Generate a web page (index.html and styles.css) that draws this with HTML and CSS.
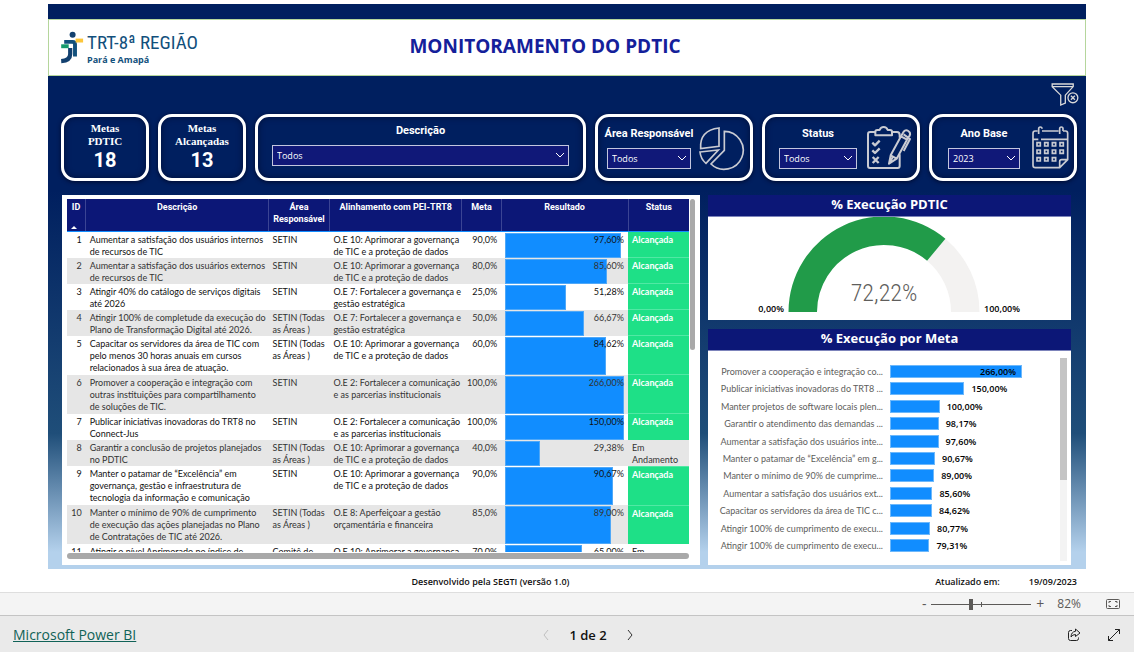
FILE: index.html
```html
<!DOCTYPE html>
<html lang="pt-BR">
<head>
<meta charset="utf-8">
<title>Monitoramento do PDTIC</title>
<link rel="stylesheet" href="styles.css">
</head>
<body>
<main class="stage">
  <div class="report">
    <header class="banner">
      <div class="brand">
        <svg class="brand-mark" viewBox="0 0 80 106" aria-hidden="true">
          <circle cx="42" cy="12" r="10" fill="#12406f"/>
          <path d="M14 36H42Q50 36 50 44V85" fill="none" stroke="#12507c" stroke-width="13"/>
          <path d="M34 56V76Q34 98 4 100" fill="none" stroke="#12406f" stroke-width="14"/>
          <rect x="4" y="44" width="25" height="13" fill="#159a6c"/>
          <rect x="52" y="25" width="25" height="13" fill="#fcc63a"/>
        </svg>
        <div class="brand-text">
          <span class="brand-name">TRT-8ª REGIÃO</span>
          <span class="brand-place">Pará e Amapá</span>
        </div>
      </div>
      <h1 class="title">MONITORAMENTO DO PDTIC</h1>
    </header>

    <div class="canvas">
      <div class="clear-row">
        <button class="clear" aria-label="Limpar filtros">
          <svg viewBox="0 0 90 76" width="30" height="25" fill="none" stroke="#d9d9d9" stroke-width="4">
            <path d="M6 6H70V14L46 40V64L32 70V40L6 14ZM6 14H70"/>
            <circle cx="69" cy="48" r="15" fill="#001f5f"/>
            <path d="M63 42L75 54M75 42L63 54"/>
          </svg>
        </button>
      </div>

      <div class="cards">
        <div class="card kpi"><span class="kpi-label">Metas<br>PDTIC</span><span class="kpi-value">18</span></div>
        <div class="card kpi"><span class="kpi-label">Metas<br>Alcançadas</span><span class="kpi-value">13</span></div>
        <div class="card slicer wide">
          <div class="field">
            <label for="f-desc">Descrição</label>
            <div class="pick"><select id="f-desc"><option>Todos</option></select><svg viewBox="0 0 10 6"><path d="M1 1L5 5L9 1"/></svg></div>
          </div>
        </div>
        <div class="card slicer area">
          <div class="field">
            <label for="f-area">Área Responsável</label>
            <div class="pick"><select id="f-area"><option>Todos</option></select><svg viewBox="0 0 10 6"><path d="M1 1L5 5L9 1"/></svg></div>
          </div>
          <svg class="deco" viewBox="0 0 144 138" width="48" height="46" fill="none" stroke="#c9cbd2" stroke-width="5">
            <path d="M63 9V64L8 71Q4 16 63 9Z"/>
            <path d="M6 81L61 75L24 115Q8 102 6 81Z"/>
            <path d="M79 19A57 57 0 1 1 39 117L79 76Z"/>
          </svg>
        </div>
        <div class="card slicer status">
          <div class="field">
            <label for="f-status">Status</label>
            <div class="pick"><select id="f-status"><option>Todos</option></select><svg viewBox="0 0 10 6"><path d="M1 1L5 5L9 1"/></svg></div>
          </div>
          <svg class="deco" viewBox="0 0 141 138" width="47" height="46" fill="none" stroke="#c9cbd2" stroke-width="6" stroke-linejoin="round">
            <path d="M30 21H12Q6 21 6 28V123Q6 129 12 129H95Q101 129 101 123V88M76 21H93Q101 21 101 30V38"/>
            <path d="M28 31V20Q28 15 34 15H41Q44 6 53 6T65 15H72Q78 15 78 20V31Z"/>
            <path d="M19 53L27 61L41 47M19 76L27 84L41 70M20 96L38 114M38 96L20 114" stroke-width="7"/>
            <path d="M69 116L74 91L105 34L123 44L92 101ZM74 91L92 101M105 34L113 20Q119 13 127 18T131 32L123 44M69 116L80 97M113 28L132 42L113 78"/>
          </svg>
        </div>
        <div class="card slicer year">
          <div class="field">
            <label for="f-year">Ano Base</label>
            <div class="pick"><select id="f-year"><option>2023</option></select><svg viewBox="0 0 10 6"><path d="M1 1L5 5L9 1"/></svg></div>
          </div>
          <svg class="deco" viewBox="0 0 117 135" width="39" height="45" fill="none" stroke="#c9cbd2" stroke-width="5">
            <path d="M20 18H12Q6 18 6 25V121Q6 128 13 128H86L110 104V25Q110 18 104 18H96M33 18H83M6 43H22M30 43H110M86 128V110Q86 104 92 104H110"/>
            <path d="M23 27V11Q23 6 28 6T33 11M86 27V11Q86 6 91 6T96 11V18"/>
            <path d="M18 53h10v10h-10zM41 53h10v10h-10zM64 53h10v10h-10zM87 53h10v10h-10zM18 75h10v10h-10zM41 75h10v10h-10zM64 75h10v10h-10zM87 75h10v10h-10zM18 98h10v10h-10zM41 98h10v10h-10zM64 98h10v10h-10z"/>
          </svg>
        </div>
      </div>

      <div class="panels">
        <section class="panel table-panel">
          <div class="table-view">
            <table class="grid">
              <colgroup><col class="c-id"><col class="c-desc"><col class="c-area"><col class="c-pei"><col class="c-meta"><col class="c-res"><col class="c-status"></colgroup>
              <thead>
                <tr><th>ID<span class="sort"></span></th><th>Descrição</th><th>Área<br>Responsável</th><th>Alinhamento com PEI-TRT8</th><th>Meta</th><th>Resultado</th><th>Status</th></tr>
              </thead>
              <tbody>
                <tr><td>1</td><td>Aumentar a satisfação dos usuários internos<br>de recursos de TIC</td><td>SETIN</td><td>O.E 10: Aprimorar a governança<br>de TIC e a proteção de dados</td><td>90,0%</td><td><div class="track"><div class="bar" style="width:97.6%"></div></div><span>97,60%</span></td><td class="ok">Alcançada</td></tr>
                <tr><td>2</td><td>Aumentar a satisfação dos usuários externos<br>de recursos de TIC</td><td>SETIN</td><td>O.E 10: Aprimorar a governança<br>de TIC e a proteção de dados</td><td>80,0%</td><td><div class="track"><div class="bar" style="width:85.6%"></div></div><span>85,60%</span></td><td class="ok">Alcançada</td></tr>
                <tr><td>3</td><td>Atingir 40% do catálogo de serviços digitais<br>até 2026</td><td>SETIN</td><td>O.E 7: Fortalecer a governança e<br>gestão estratégica</td><td>25,0%</td><td><div class="track"><div class="bar" style="width:51.28%"></div></div><span>51,28%</span></td><td class="ok">Alcançada</td></tr>
                <tr><td>4</td><td>Atingir 100% de completude da execução do<br>Plano de Transformação Digital até 2026.</td><td>SETIN (Todas<br>as Áreas )</td><td>O.E 7: Fortalecer a governança e<br>gestão estratégica</td><td>50,0%</td><td><div class="track"><div class="bar" style="width:66.67%"></div></div><span>66,67%</span></td><td class="ok">Alcançada</td></tr>
                <tr class="tall"><td>5</td><td>Capacitar os servidores da área de TIC com<br>pelo menos 30 horas anuais em cursos<br>relacionados à sua área de atuação.</td><td>SETIN (Todas<br>as Áreas )</td><td>O.E 10: Aprimorar a governança<br>de TIC e a proteção de dados</td><td>60,0%</td><td><div class="track"><div class="bar" style="width:84.62%"></div></div><span>84,62%</span></td><td class="ok">Alcançada</td></tr>
                <tr class="tall"><td>6</td><td>Promover a cooperação e integração com<br>outras instituições para compartilhamento<br>de soluções de TIC.</td><td>SETIN</td><td>O.E 2: Fortalecer a comunicação<br>e as parcerias institucionais</td><td>100,0%</td><td><div class="track"><div class="bar" style="width:100%"></div></div><span>266,00%</span></td><td class="ok">Alcançada</td></tr>
                <tr><td>7</td><td>Publicar iniciativas inovadoras do TRT8 no<br>Connect-Jus</td><td>SETIN</td><td>O.E 2: Fortalecer a comunicação<br>e as parcerias institucionais</td><td>100,0%</td><td><div class="track"><div class="bar" style="width:100%"></div></div><span>150,00%</span></td><td class="ok">Alcançada</td></tr>
                <tr><td>8</td><td>Garantir a conclusão de projetos planejados<br>no PDTIC</td><td>SETIN (Todas<br>as Áreas )</td><td>O.E 10: Aprimorar a governança<br>de TIC e a proteção de dados</td><td>40,0%</td><td><div class="track"><div class="bar" style="width:29.38%"></div></div><span>29,38%</span></td><td>Em<br>Andamento</td></tr>
                <tr class="tall"><td>9</td><td>Manter o patamar de “Excelência” em<br>governança, gestão e infraestrutura de<br>tecnologia da informação e comunicação</td><td>SETIN</td><td>O.E 10: Aprimorar a governança<br>de TIC e a proteção de dados</td><td>90,0%</td><td><div class="track"><div class="bar" style="width:90.67%"></div></div><span>90,67%</span></td><td class="ok">Alcançada</td></tr>
                <tr class="tall"><td>10</td><td>Manter o mínimo de 90% de cumprimento<br>de execução das ações planejadas no Plano<br>de Contratações de TIC até 2026.</td><td>SETIN (Todas<br>as Áreas )</td><td>O.E 8: Aperfeiçoar a gestão<br>orçamentária e financeira</td><td>85,0%</td><td><div class="track"><div class="bar" style="width:89%"></div></div><span>89,00%</span></td><td class="ok">Alcançada</td></tr>
                <tr><td>11</td><td>Atingir o nível Aprimorado no índice de</td><td>Comitê de</td><td>O.E 10: Aprimorar a governança</td><td>70,0%</td><td><div class="track"><div class="bar" style="width:65%"></div></div><span>65,00%</span></td><td>Em</td></tr>
              </tbody>
            </table>
          </div>
          <div class="vscroll"></div>
          <div class="hscroll"></div>
        </section>

        <div class="side">
          <section class="panel gauge-panel">
            <h2>% Execução PDTIC</h2>
            <svg class="gauge" viewBox="0 0 363 103" role="img" aria-label="72,22%">
              <path d="M237.4 21.8A95.5 95.5 0 0 1 271.5 95H243A67 67 0 0 0 219.1 43.7Z" fill="#f3f2f1"/>
              <path d="M80.5 95A95.5 95.5 0 0 1 237.4 21.8L219.1 43.7A67 67 0 0 0 109 95Z" fill="#219b49"/>
              <text class="gauge-value" x="176" y="84" text-anchor="middle">72,22%</text>
              <text class="gauge-end" x="76" y="95" text-anchor="end">0,00%</text>
              <text class="gauge-end" x="276" y="95">100,00%</text>
            </svg>
          </section>
          <section class="panel chart-panel">
            <h2>% Execução por Meta</h2>
            <div class="chart">
              <div class="rows">
                <div class="row"><span class="name">Promover a cooperação e integração co...</span><div class="plot"><div class="hbar in" style="width:80%">266,00%</div></div></div>
                <div class="row"><span class="name">Publicar iniciativas inovadoras do TRT8 ...</span><div class="plot"><div class="hbar" style="width:45.1%"></div>150,00%</div></div>
                <div class="row"><span class="name">Manter projetos de software locais plen...</span><div class="plot"><div class="hbar" style="width:30.1%"></div>100,00%</div></div>
                <div class="row"><span class="name">Garantir o atendimento das demandas ...</span><div class="plot"><div class="hbar" style="width:29.5%"></div>98,17%</div></div>
                <div class="row"><span class="name">Aumentar a satisfação dos usuários inte...</span><div class="plot"><div class="hbar" style="width:29.4%"></div>97,60%</div></div>
                <div class="row"><span class="name">Manter o patamar de “Excelência” em g...</span><div class="plot"><div class="hbar" style="width:27.3%"></div>90,67%</div></div>
                <div class="row"><span class="name">Manter o mínimo de 90% de cumprime...</span><div class="plot"><div class="hbar" style="width:26.8%"></div>89,00%</div></div>
                <div class="row"><span class="name">Aumentar a satisfação dos usuários ext...</span><div class="plot"><div class="hbar" style="width:25.7%"></div>85,60%</div></div>
                <div class="row"><span class="name">Capacitar os servidores da área de TIC c...</span><div class="plot"><div class="hbar" style="width:25.5%"></div>84,62%</div></div>
                <div class="row"><span class="name">Atingir 100% de cumprimento de execu...</span><div class="plot"><div class="hbar" style="width:24.3%"></div>80,77%</div></div>
                <div class="row"><span class="name">Atingir 100% de cumprimento de execu...</span><div class="plot"><div class="hbar" style="width:23.9%"></div>79,31%</div></div>
              </div>
              <div class="chart-scroll"><div class="chart-thumb"></div></div>
            </div>
          </section>
        </div>
      </div>
    </div>
  </div>
  <div class="credits">
    <span class="author">Desenvolvido pela SEGTI (versão 1.0)</span>
    <span class="updated"><span>Atualizado em:</span><time datetime="2023-09-19">19/09/2023</time></span>
  </div>
</main>

<div class="zoombar">
  <button class="step" aria-label="Diminuir zoom">-</button>
  <div class="slider"><input type="range" min="0" max="100" value="39" aria-label="Zoom"></div>
  <button class="step" aria-label="Aumentar zoom">+</button>
  <span class="percent">82%</span>
  <button class="fit" aria-label="Ajustar à página">
    <svg viewBox="0 0 14 10" width="14" height="10" fill="none" stroke="#5c5a58"><rect x=".5" y=".5" width="13" height="9" rx="1"/><path d="M3 4V2.500H5M9 2.500H11V4M11 6V7.500H9M5 7.500H3V6"/></svg>
  </button>
</div>

<footer class="footer">
  <div class="footer-left"><a href="#">Microsoft Power BI</a></div>
  <nav class="pager">
    <button aria-label="Página anterior" disabled><svg viewBox="0 0 6 12" width="6" height="12"><path d="M5 1L1 6L5 11" stroke="#c0c0c0"/></svg></button>
    <span>1 de 2</span>
    <button aria-label="Próxima página"><svg viewBox="0 0 6 12" width="6" height="12"><path d="M1 1L5 6L1 11" stroke="#333"/></svg></button>
  </nav>
  <div class="actions">
    <button aria-label="Compartilhar"><svg viewBox="0 0 14 14" width="14" height="14" fill="none" stroke="#222" stroke-linejoin="round"><path d="M5 2.500H3.500Q1.500 2.500 1.500 4.500V10.500Q1.500 12.500 3.500 12.500H9.500Q11.500 12.500 11.500 10.500V9.500M8.500 1L13 5L8.500 8.500V6.500Q5.500 6.500 4 9Q4.200 3.800 8.500 3.300Z"/></svg></button>
    <button aria-label="Tela cheia"><svg viewBox="0 0 14 14" width="14" height="14" fill="none" stroke="#222"><path d="M8 1.500H12.500V6M12.500 1.500L1.500 12.500M1.500 8V12.500H6"/></svg></button>
  </div>
</footer>
</body>
</html>
```
FILE: styles.css
```css
* { box-sizing: border-box; }

body {
  margin: 0;
  min-height: 100vh;
  display: flex;
  flex-direction: column;
  background: #fff;
  font-family: "Open Sans", "Noto Sans", sans-serif;
  font-size: 9px;
  line-height: 12px;
  color: #111;
}

button {
  padding: 0;
  border: 0;
  background: none;
  font: inherit;
  color: inherit;
  display: flex;
  align-items: center;
  justify-content: center;
}

.stage {
  flex: 1;
  display: flex;
  flex-direction: column;
  padding: 4px 48px 0;
}

.report {
  flex: 1;
  display: flex;
  flex-direction: column;
  padding-top: 15px;
  background: linear-gradient(#001f5f 0%, #001f5f 33%, #1f4e79 76%, #b4d1ec 97%);
}

.banner {
  display: grid;
  grid-template-columns: 1fr auto 1fr;
  align-items: center;
  height: 57px;
  padding-right: 44px;
  background: #fff;
  border: 1px solid #b5d69c;
}

.brand { display: flex; gap: 3px; padding-left: 11px; }
.brand-mark { width: 24px; height: 34px; }
.brand-text { display: flex; flex-direction: column; padding-top: 2px; color: #12507c; white-space: nowrap; }
.brand-name { font: 19px/22px "Roboto Condensed", "Liberation Sans Narrow", Roboto, sans-serif; }
.brand-place { font: bold 9px/12px "Open Sans", sans-serif; }

.title { margin: 0; padding-bottom: 4px; font-size: 19px; line-height: 24px; font-weight: 700; color: #14209a; white-space: nowrap; }

.canvas { flex: 1; display: flex; flex-direction: column; padding: 6px 15px 4px 13px; }
.clear-row { display: flex; justify-content: flex-end; height: 32px; margin-right: -9px; }
.clear { width: 30px; height: 25px; }

.cards {
  display: grid;
  grid-template-columns: 88fr 88fr 331fr 158fr 158fr 148fr;
  gap: 9px;
  margin-right: -6px;
}

.card {
  min-width: 0;
  height: 67px;
  border: 3px solid #fff;
  border-radius: 14px;
  box-shadow: 0 1px 4px #000a2c, inset 0 0 6px #000f38;
  color: #fff;
}

.kpi { display: flex; flex-direction: column; align-items: center; padding-top: 5px; text-align: center; }
.kpi-label { font: bold 11px/13px "Liberation Serif", serif; }
.kpi-value { font: 700 20px/24px Roboto, sans-serif; }

.slicer { display: flex; justify-content: space-between; align-items: center; padding: 0 4px 0 5px; }
.slicer.wide { padding: 0 14px 6px; }
.field { flex: 1; min-width: 0; display: flex; flex-direction: column; align-items: stretch; gap: 6px; }
.field label { font: 700 11px/16px Roboto, sans-serif; text-align: center; white-space: nowrap; }
.deco { flex: none; }
.area .pick { margin: 0 4px; }
.area .deco { margin-left: 3px; }
.status .field { padding: 0 9px; }
.year .field { padding: 0 11px; }
.pick { position: relative; }
.pick select {
  appearance: none;
  display: block;
  width: 100%;
  height: 21px;
  padding: 0 4px;
  border: 1px solid #c3c6de;
  border-radius: 0;
  background: #101878;
  color: #fff;
  font: 9px/12px "Open Sans", sans-serif;
}
.pick svg { position: absolute; right: 4px; top: 7px; width: 10px; height: 6px; fill: none; stroke: #fff; pointer-events: none; }

.panels { flex: 1; display: grid; grid-template-columns: 638fr 363fr; gap: 8px; margin: 14px 0 0 1px; }
.panel { background: #fff; min-width: 0; }

.table-panel {
  display: grid;
  grid-template-columns: 1fr 5px;
  grid-template-rows: 353px 6px;
  gap: 1px;
  padding: 4px 5px 6px;
}
.table-view { overflow: hidden; }
.vscroll { height: 151px; border-radius: 3px; background: #a9a9a9; }
.hscroll { border-radius: 3px; background: #a9a9a9; }

.grid { width: 100%; border-collapse: collapse; table-layout: fixed; font-family: Lato, sans-serif; }
.c-id { width: 3%; }
.c-desc { width: 29.400%; }
.c-area { width: 9.800%; }
.c-pei { width: 21.300%; }
.c-meta { width: 6.300%; }
.c-res { width: 20.400%; }
.c-status { width: 9.800%; }

.grid th {
  position: relative;
  height: 32px;
  padding: 2px 0;
  background: #0c1777;
  border-left: 1px solid #3b4494;
  border-bottom: 1px solid #118dff;
  color: #fff;
  font-family: Roboto, sans-serif;
  vertical-align: top;
  white-space: nowrap;
}
.grid th:first-child { border-left: 0; }
.sort { position: absolute; left: 4px; bottom: 2px; border: 3px solid transparent; border-top: 0; border-bottom-color: #fff; }

.grid td { position: relative; height: 26px; padding: 2px 4px 0; vertical-align: top; white-space: nowrap; }
.grid .tall td { height: 39px; }
.grid tbody tr:nth-child(even) { background: #e6e6e6; color: #333; }
.grid td:nth-child(1), .grid td:nth-child(5), .grid td:nth-child(6) { text-align: right; }
.grid .ok { background: #1ee087; border-top: 1px solid #51e8a4; color: #fff; font-weight: 700; }
.track { position: absolute; inset: 1px 4px 0; }
.bar { height: 100%; background: #118dff; border: 1px solid #4fa8f8; }
.grid td span { position: relative; }

.side { display: flex; flex-direction: column; gap: 9px; min-width: 0; }
.panel h2 {
  margin: 0;
  height: 22px;
  background: #0c1777;
  border-bottom: 1px solid #7d84bb;
  color: #fff;
  font-size: 13px;
  line-height: 19px;
  text-align: center;
}
.gauge { display: block; width: 100%; }
.gauge-value { font: 300 24px "Roboto Condensed", "Liberation Sans Narrow", Roboto, sans-serif; fill: #605e5c; }
.gauge-end { font: 600 9px "Open Sans", sans-serif; fill: #000; }

.chart-panel { flex: 1; display: flex; flex-direction: column; }
.chart { flex: 1; display: flex; justify-content: space-between; padding: 7px 4px 4px 0; }
.rows { flex: 1; display: flex; flex-direction: column; justify-content: space-between; padding: 7px 5px 9px 0; }
.row { display: flex; gap: 7px; height: 13px; line-height: 13px; }
.name { width: 175px; text-align: right; font-family: Lato, sans-serif; color: #605e5c; white-space: nowrap; }
.plot { flex: 1; display: flex; gap: 7px; font-weight: 600; color: #000; }
.hbar { height: 13px; background: #118dff; border: 1px solid #6db8fb; line-height: 11px; }
.hbar.in { padding-right: 5px; text-align: right; }
.chart-scroll { width: 7px; background: #f3f3f3; }
.chart-thumb { height: 60%; background: #c4c4c4; }

.credits {
  display: flex;
  align-items: center;
  justify-content: space-between;
  height: 23px;
  padding: 2px 9px 0 0;
  font-weight: 600;
}
.author { flex: none; width: 86%; text-align: center; }
.updated { display: flex; flex: none; gap: 29px; margin-left: -10%; white-space: nowrap; }

.zoombar {
  display: flex;
  align-items: center;
  justify-content: flex-end;
  height: 23px;
  padding-right: 14px;
  border-top: 1px solid #dedede;
  background: #f4f4f4;
  color: #5c5a58;
}
.step { width: 10px; font-size: 14px; }
.slider { position: relative; width: 100px; height: 12px; margin: 0 4px 0 2px; display: flex; }
.slider::after { content: ""; position: absolute; left: 50px; top: 4px; width: 1px; height: 5px; background: #5c5a58; }
.slider input { appearance: none; width: 100%; margin: 0; height: 12px; background: linear-gradient(#5c5a58, #5c5a58) center / 100% 1px no-repeat; }
.slider input::-webkit-slider-thumb { appearance: none; width: 4px; height: 11px; background: #5c5a58; }
.percent { margin-left: 12px; font-size: 12px; }
.fit { margin-left: 25px; }

.footer {
  display: grid;
  grid-template-columns: 1fr auto 1fr;
  align-items: center;
  height: 37px;
  padding: 2px 13px 0;
  border-top: 1px solid #c4c4c4;
  background: #eaeaea;
}
.footer a { font-size: 14px; line-height: 16px; color: #106257; }
.pager { display: flex; align-items: center; gap: 20px; font-size: 13px; font-weight: 600; margin-left: 42px; }
.pager path { fill: none; }
.actions { display: flex; justify-content: flex-end; gap: 26px; }
```
